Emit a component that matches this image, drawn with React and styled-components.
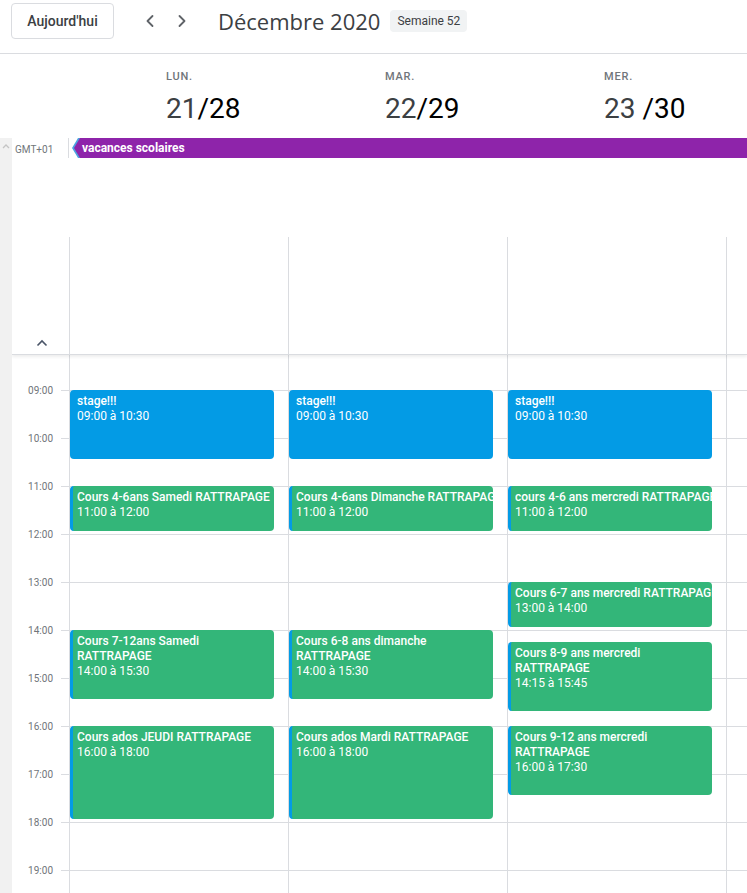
import React from 'react'
import styled, { createGlobalStyle } from 'styled-components'
import { ChevronLeft, ChevronRight } from 'lucide-react'

const GlobalStyle = createGlobalStyle`
    html, body {
        margin:0;
        padding:0;
        background:#fff;
    }
    * {
        box-sizing:border-box;
    }
`

const HOUR = 48
const FIRST = 9
const LEAD = 35
const hours = [9, 10, 11, 12, 13, 14, 15, 16, 17, 18, 19]

const days = [
    {
        name: 'LUN.', num: '21', alt: '/28',
        events: [
            { title: 'stage!!!', time: '09:00 à 10:30', start: 9, end: 10.5, kind: 'blue' },
            { title: 'Cours 4-6ans Samedi RATTRAPAGE', time: '11:00 à 12:00', start: 11, end: 12 },
            { title: 'Cours 7-12ans Samedi RATTRAPAGE', time: '14:00 à 15:30', start: 14, end: 15.5 },
            { title: 'Cours ados JEUDI RATTRAPAGE', time: '16:00 à 18:00', start: 16, end: 18 },
        ],
    },
    {
        name: 'MAR.', num: '22', alt: '/29',
        events: [
            { title: 'stage!!!', time: '09:00 à 10:30', start: 9, end: 10.5, kind: 'blue' },
            { title: 'Cours 4-6ans Dimanche RATTRAPAGE', time: '11:00 à 12:00', start: 11, end: 12 },
            { title: 'Cours 6-8 ans dimanche RATTRAPAGE', time: '14:00 à 15:30', start: 14, end: 15.5 },
            { title: 'Cours ados Mardi RATTRAPAGE', time: '16:00 à 18:00', start: 16, end: 18 },
        ],
    },
    {
        name: 'MER.', num: '23', alt: ' /30',
        events: [
            { title: 'stage!!!', time: '09:00 à 10:30', start: 9, end: 10.5, kind: 'blue' },
            { title: 'cours 4-6 ans mercredi RATTRAPAGE', time: '11:00 à 12:00', start: 11, end: 12 },
            { title: 'Cours 6-7 ans mercredi RATTRAPAGE', time: '13:00 à 14:00', start: 13, end: 14 },
            { title: 'Cours 8-9 ans mercredi RATTRAPAGE', time: '14:15 à 15:45', start: 14.25, end: 15.75 },
            { title: 'Cours 9-12 ans mercredi RATTRAPAGE', time: '16:00 à 17:30', start: 16, end: 17.5 },
        ],
    },
    { name: '', num: '', alt: '', events: [] },
]

const pad = (h) => (h < 10 ? '0' + h : '' + h) + ':00'

const App = () => {
    return (
        <>
            <GlobalStyle />
            <Page>
                <TopBar>
                    <TodayButton>Aujourd'hui</TodayButton>
                    <NavGroup>
                        <NavButton><ChevronLeft size={20} strokeWidth={2.2} /></NavButton>
                        <NavButton><ChevronRight size={20} strokeWidth={2.2} /></NavButton>
                    </NavGroup>
                    <Title>Décembre 2020</Title>
                    <WeekBadge>Semaine 52</WeekBadge>
                </TopBar>

                <HeaderRow>
                    <div />
                    {days.map((d, i) => (
                        <HeaderCell key={i}>
                            <DayName>{d.name}</DayName>
                            <DayNumber>
                                {d.num}<AltNumber>{d.alt}</AltNumber>
                            </DayNumber>
                        </HeaderCell>
                    ))}
                </HeaderRow>

                <Body>
                    <SideStrip>
                        <svg width="8" height="6" viewBox="0 0 8 6">
                            <polyline points="1,5 4,2 7,5" fill="none" stroke="#c4c4c4" strokeWidth="1.3" />
                        </svg>
                    </SideStrip>
                    <Main>
                        <AllDay>
                            <AllDayRow>
                                <ZoneLabel>GMT+01</ZoneLabel>
                                <ChipTrack>
                                    <Chip>
                                        <ChipFill>vacances scolaires</ChipFill>
                                    </Chip>
                                </ChipTrack>
                            </AllDayRow>
                            <AllDayGap />
                            <ColumnsRow>
                                <CollapseCell>
                                    <svg width="12" height="8" viewBox="0 0 12 8">
                                        <polyline points="1.5,6.5 6,2 10.5,6.5" fill="none" stroke="#4a5568" strokeWidth="1.6" />
                                    </svg>
                                </CollapseCell>
                                {days.map((d, i) => <EmptyColumn key={i} />)}
                            </ColumnsRow>
                        </AllDay>

                        <Grid>
                            <Gutter>
                                <LeadSlot />
                                {hours.map((h) => (
                                    <GutterSlot key={h}>
                                        <TimeLabel>{pad(h)}</TimeLabel>
                                    </GutterSlot>
                                ))}
                            </Gutter>
                            {days.map((d, i) => (
                                <DayColumn key={i}>
                                    <LeadSlot />
                                    {hours.map((h) => <HourSlot key={h} />)}
                                    {d.events.map((e, j) => (
                                        <Event
                                            key={j}
                                            $kind={e.kind}
                                            $single={e.end - e.start <= 1}
                                            style={{
                                                top: LEAD + (e.start - FIRST) * HOUR,
                                                height: (e.end - e.start) * HOUR - 3,
                                            }}
                                        >
                                            <EventTitle $single={e.end - e.start <= 1}>{e.title}</EventTitle>
                                            <EventTime>{e.time}</EventTime>
                                        </Event>
                                    ))}
                                </DayColumn>
                            ))}
                        </Grid>
                    </Main>
                </Body>
            </Page>
        </>
    )
}

export default App




const Page = styled.div`
    width:747px;
    height:893px;
    overflow:hidden;
    background:#fff;
    font-family:Roboto, "Noto Sans", Arial, sans-serif;
    color:#3c4043;
`

const TopBar = styled.div`
    height:54px;
    display:flex;
    align-items:center;
    padding:3px 11px 15px 11px;
    border-bottom:1px solid #dadce0;
`

const TodayButton = styled.button`
    height:36px;
    width:103px;
    border:1px solid #dadce0;
    border-radius:4px;
    background:#fff;
    color:#3c4043;
    font-family:Roboto, Arial, sans-serif;
    font-size:14px;
    font-weight:500;
    padding:0;
    cursor:pointer;
`

const NavGroup = styled.div`
    display:flex;
    gap:8px;
    margin-left:24px;
`

const NavButton = styled.div`
    width:24px;
    height:24px;
    display:flex;
    align-items:center;
    justify-content:center;
    color:#5f6368;
`

const Title = styled.div`
    margin-left:24px;
    font-family:"Open Sans", Roboto, sans-serif;
    font-size:22px;
    color:#3c4043;
`

const WeekBadge = styled.div`
    margin-left:10px;
    height:22px;
    padding:0 7px;
    display:flex;
    align-items:center;
    background:#f1f3f4;
    border-radius:4px;
    font-size:12px;
    color:#3c4043;
`

const HeaderRow = styled.div`
    height:84px;
    display:grid;
    grid-template-columns:69px repeat(4, 219px);
`

const HeaderCell = styled.div`
    padding:15px 0 0 97px;
`

const DayName = styled.div`
    height:16px;
    line-height:16px;
    font-size:11px;
    font-weight:500;
    letter-spacing:0.8px;
    color:#70757a;
`

const DayNumber = styled.div`
    margin-top:8px;
    height:32px;
    line-height:32px;
    font-size:28px;
    color:#3c4043;
    white-space:pre;
`

const AltNumber = styled.span`
    color:#000;
`

const Body = styled.div`
    display:flex;
    height:755px;
`

const SideStrip = styled.div`
    width:12px;
    flex-shrink:0;
    background:#f1f1f1;
    padding:5px 0 0 2px;
    display:flex;
    align-items:flex-start;
`

const Main = styled.div`
    flex:1;
    min-width:0;
    overflow:hidden;
    display:flex;
    flex-direction:column;
`

const AllDay = styled.div`
    height:217px;
    flex-shrink:0;
    display:flex;
    flex-direction:column;
    border-bottom:1px solid #dadce0;
    box-shadow:0 2px 3px rgba(0,0,0,0.07);
    position:relative;
    z-index:1;
`

const AllDayRow = styled.div`
    height:20px;
    display:flex;
`

const ZoneLabel = styled.div`
    width:57px;
    flex-shrink:0;
    padding:3px 0 0 3px;
    display:flex;
    align-items:center;
    font-size:10px;
    color:#70757a;
    border-right:1px solid #dadce0;
`

const ChipTrack = styled.div`
    flex:1;
    padding-left:3px;
`

const Chip = styled.div`
    height:20px;
    background:#4fa3e0;
    clip-path:polygon(6px 0, 100% 0, 100% 100%, 6px 100%, 0 50%);
`

const ChipFill = styled.div`
    height:20px;
    margin-left:2px;
    padding:1px 0 0 8px;
    background:#8e24aa;
    clip-path:polygon(6px 0, 100% 0, 100% 100%, 6px 100%, 0 50%);
    color:#fff;
    font-size:12px;
    font-weight:700;
    line-height:19px;
    white-space:nowrap;
`

const AllDayGap = styled.div`
    height:79px;
`

const ColumnsRow = styled.div`
    flex:1;
    display:grid;
    grid-template-columns:57px repeat(4, 219px);
`

const CollapseCell = styled.div`
    display:flex;
    align-items:flex-end;
    padding:0 0 7px 24px;
`

const EmptyColumn = styled.div`
    border-left:1px solid #dadce0;
`

const Grid = styled.div`
    flex:1;
    overflow:hidden;
    display:grid;
    grid-template-columns:57px repeat(4, 219px);
    align-items:start;
`

const Gutter = styled.div`
    display:flex;
    flex-direction:column;
`

const LeadSlot = styled.div`
    height:${LEAD}px;
    flex-shrink:0;
`

const GutterSlot = styled.div`
    height:${HOUR}px;
    flex-shrink:0;
    position:relative;

    &::before{
        content:'';
        position:absolute;
        top:0;
        right:0;
        width:8px;
        height:1px;
        background:#dadce0;
    }
`

const TimeLabel = styled.div`
    position:absolute;
    top:-6px;
    right:16px;
    font-size:10px;
    line-height:14px;
    color:#70757a;
`

const DayColumn = styled.div`
    position:relative;
    display:flex;
    flex-direction:column;
    border-left:1px solid #dadce0;
`

const HourSlot = styled.div`
    height:${HOUR}px;
    flex-shrink:0;
    border-top:1px solid #dadce0;
`

const Event = styled.div`
    position:absolute;
    left:0;
    right:14px;
    border-radius:4px;
    overflow:hidden;
    color:#fff;
    font-size:12px;
    line-height:15px;
    padding:4px ${(p) => (p.$single ? '0' : '8px')} 0 ${(p) => (p.$kind === 'blue' ? '7px' : '4px')};
    background:${(p) => (p.$kind === 'blue' ? '#039be5' : '#33b679')};
    border-left:${(p) => (p.$kind === 'blue' ? 'none' : '3px solid #039be5')};
`

const EventTitle = styled.div`
    font-weight:500;
    white-space:${(p) => (p.$single ? 'nowrap' : 'normal')};
    overflow:hidden;
`

const EventTime = styled.div`
    white-space:nowrap;
`
